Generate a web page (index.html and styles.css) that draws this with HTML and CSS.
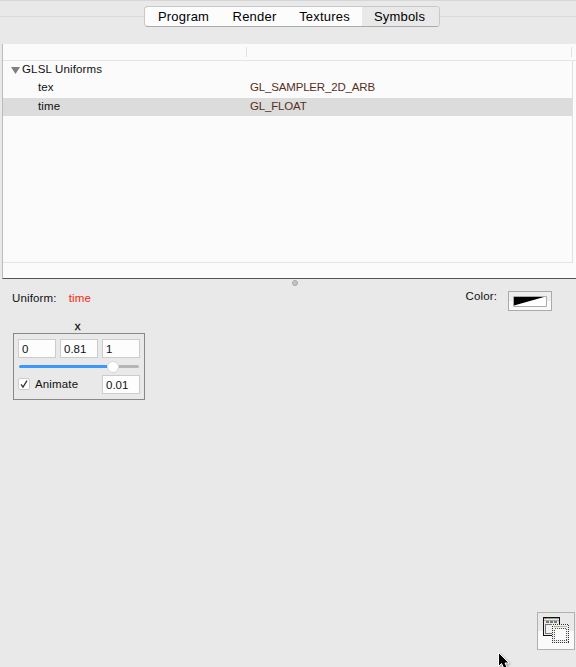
FILE: index.html
```html
<!DOCTYPE html>
<html lang="en">
<head>
<meta charset="utf-8">
<title>Symbols</title>
<link rel="stylesheet" href="styles.css">
</head>
<body>
<header class="tabbar">
  <nav class="tabs">
    <button class="tab program">Program</button>
    <button class="tab render">Render</button>
    <button class="tab textures">Textures</button>
    <button class="tab symbols selected">Symbols</button>
  </nav>
</header>
<main class="outline">
  <div class="table-head"><i></i><i></i></div>
  <div class="table-body">
    <div class="row group"><svg class="arrow" width="9" height="7" viewBox="0 0 9 7"><path d="M0 0h9L4.500 7z" fill="#808080"/></svg><span class="group-name">GLSL Uniforms</span></div>
    <div class="row"><span class="name">tex</span><span class="type">GL_SAMPLER_2D_ARB</span></div>
    <div class="row active"><span class="name">time</span><span class="type">GL_FLOAT</span></div>
  </div>
</main>
<div class="splitter"><i></i></div>
<section class="inspector">
  <div class="uniform"><span class="caption">Uniform:</span><span class="value">time</span></div>
  <div class="color"><span class="color-label">Color:</span>
    <button class="well"><svg width="34" height="11" viewBox="0 0 34 11"><path fill="#fff" d="M0 0h34v11H0z"/><path d="M.5.5h33v10H.5z" fill="none" stroke="#aaa"/><path d="M1 1h30L1 9.500z"/></svg></button>
  </div>
</section>
<section class="component">
  <h2>x</h2>
  <div class="box">
    <div class="fields"><span class="field">0</span><span class="field">0.81</span><span class="field">1</span></div>
    <div class="slider"><i class="fill"></i><i class="knob"></i><i class="rest"></i></div>
    <div class="animate"><span class="check"><svg width="10" height="10" viewBox="0 0 10 10"><path d="M2 5.400L4 8L8 1.700" fill="none" stroke="#333" stroke-width="1.300"/></svg></span><span class="animate-label">Animate</span><span class="field">0.01</span></div>
  </div>
</section>
<button class="windows"><svg width="26" height="26" viewBox="0 0 26 26" shape-rendering="crispEdges">
  <path d="M.5.5h16v18H.5z" fill="#eaeaea" stroke="#111"/>
  <path d="M1 1.500h15" stroke="#999"/>
  <path d="M2 1.500h1" stroke="#f34"/><path d="M4 1.500h1" stroke="#da3"/><path d="M6 1.500h1" stroke="#4b5"/>
  <path d="M1 3.500h15" stroke="#aaa"/>
  <path d="M3 5h3m1 0h3m1 0h3" stroke="#777" stroke-width="2"/>
  <path d="M2.500 7.500h12v9h-12z" fill="#f1f1f1" stroke="#777"/>
  <path d="M9 7h17v19H9z" fill="#eee"/>
  <path d="M9.500 7.500h16v18h-16z" fill="none" stroke="#333" stroke-dasharray="1 1"/>
  <path d="M11 9.500h13" stroke="#bbb"/><path d="M11 9.500h1" stroke="#f55"/><path d="M13 9.500h1" stroke="#db5"/><path d="M15 9.500h1" stroke="#6b6"/>
  <path d="M11.500 11.500h12v12h-12z" fill="#fafafa" stroke="#555" stroke-dasharray="1 1"/>
</svg></button>
<svg class="cursor" width="14" height="18" viewBox="0 0 14 18"><path d="M1.500.5v14l3-3 3 6 3-1.500-2.500-5H12z" fill="#000" stroke="#fff"/></svg>
</body>
</html>
```
FILE: styles.css
```css
* { box-sizing: border-box; }
body { margin: 0; height: 667px; overflow: hidden; position: relative; background: #e9e9e9; color: #111; font: 11.500px/13px "Liberation Sans", sans-serif; }
button { font: inherit; padding: 0; border: 0; }
i, svg { display: block; flex: none; }
.tabbar { height: 44px; border-top: 1px solid #d6d6d6; padding: 5px 0 0 144px; background: linear-gradient(#d9d9d9, #d9d9d9) 0 15px / 100% 1px no-repeat; }
.tabs { display: flex; width: 296px; height: 21px; border: 1px solid #c8c8c8; border-bottom-color: #aaa; border-radius: 4px; background: #fcfcfc; overflow: hidden; }
.tab { flex: none; background: transparent; font-size: 13px; letter-spacing: .2px; color: #000; }
.program { width: 77px; }
.render { width: 65px; }
.textures { width: 75px; }
.symbols { width: 77px; padding-right: 2px; }
.selected { background: #e9e9e9; }
.outline { height: 235px; margin-left: 2px; border-left: 1px solid #bbb; border-bottom: 1px solid #555; background: #fbfbfb; }
.table-head { height: 17px; border-bottom: 1px solid #e5e5e5; display: flex; padding-top: 3px; }
.table-head i { height: 10px; width: 244px; border-right: 1px solid #e2e2e2; }
.table-head i + i { width: 325px; }
.table-body { height: 202px; width: 570px; border-right: 1px solid #e0e0e0; border-bottom: 1px solid #e5e5e5; }
.row { display: flex; align-items: center; height: 19px; padding: 0 0 2px 35px; }
.group { height: 18px; padding-left: 8px; gap: 2px; }
.group-name { letter-spacing: .15px; }
.arrow { margin-top: 2px; }
.name { width: 212px; letter-spacing: .1px; }
.type { color: #56301b; letter-spacing: -.17px; }
.active { background: linear-gradient(#dcdcdc, #dcdcdc) 0 0 / 100% 18px no-repeat; }
.splitter { height: 8px; padding: 1px 0 0 292px; }
.splitter i { width: 6px; height: 6px; border-radius: 50%; background: #c4c4c4; border: 1px solid #aaa; }
.inspector { display: flex; justify-content: space-between; height: 33px; padding: 4px 24px 0 12px; letter-spacing: .15px; }
.uniform { padding-top: 1px; }
.caption { margin-right: 12px; }
.value { color: #fc2610; }
.color { display: flex; gap: 11px; }
.color-label { margin-top: -1px; }
.well { width: 44px; height: 20px; border: 1px solid #aaa; padding: 1px 0 0 4px; background: linear-gradient(#eee 50%, #fafafa 50%); }
.component { width: 132px; margin-left: 13px; }
.component h2 { margin: 0; padding-right: 3px; font: inherit; text-align: center; -webkit-text-stroke: .3px #111; }
.box { height: 67px; border: 1px solid #888; padding: 5px 4px 5px 4px; }
.fields { display: flex; gap: 4px; }
.field { flex: none; width: 38px; height: 19px; border: 1px solid #ccc; background: #fdfdfd; padding: 3px; }
.slider { display: flex; align-items: center; height: 17px; margin: 0 1px; }
.fill { height: 3px; width: 88px; border-radius: 2px 0 0 2px; background: #3c98fc; }
.knob { width: 12px; height: 12px; border-radius: 50%; background: #fff; border: 1px solid #d5d5d5; }
.rest { height: 3px; flex: 1; border-radius: 0 2px 2px 0; background: #b5b5b5; }
.animate { display: flex; }
.check { width: 12px; height: 12px; margin: 3px 5px 0 0; background: #fff; border: 1px solid #ccc; border-radius: 2px; }
.animate-label { margin-top: 3px; letter-spacing: .15px; }
.animate .field { margin: 0 0 0 auto; }
.windows { position: absolute; left: 537px; top: 612px; width: 38px; height: 38px; padding: 0 0 2px 5px; border: 1px solid #b0b0b0; background: linear-gradient(#e9e9e9 50%, #fafafa 50%); }
.cursor { position: absolute; left: 497px; top: 652px; filter: drop-shadow(1px 1px 1px #999); }
```
